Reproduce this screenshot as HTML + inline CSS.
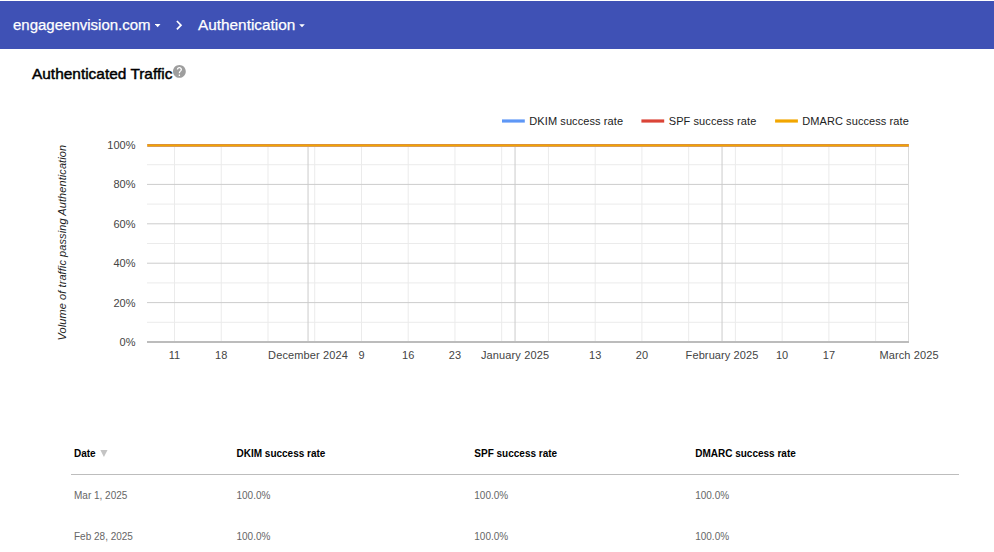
<!DOCTYPE html>
<html><head><meta charset="utf-8"><title>Postmaster Tools</title>
<style>
html,body{margin:0;padding:0;background:#fff;}
body{width:994px;height:552px;overflow:hidden;position:relative;font-family:"Liberation Sans",sans-serif;}
.bar{position:absolute;left:0;top:1px;width:994px;height:48px;background:#3f51b5;}
.bar span{position:absolute;top:12px;line-height:24px;font-size:15.5px;color:#fff;white-space:nowrap;transform-origin:0 50%;-webkit-text-stroke:0.25px #fff;}
.bar svg{position:absolute;}
.title{position:absolute;left:31.5px;top:64px;font-size:15px;line-height:20px;font-weight:normal;color:#000;white-space:nowrap;-webkit-text-stroke:0.45px #000;transform-origin:0 50%;}
.help{position:absolute;left:173.1px;top:64.9px;width:12.8px;height:12.8px;}
svg.chart{position:absolute;left:0;top:0;}
svg.chart text{font-family:"Liberation Sans",sans-serif;font-size:11px;}
.th,.td{position:absolute;font-size:10px;line-height:12px;white-space:nowrap;}
.th{font-weight:bold;color:#000;top:448px;}
.td{color:#666;}
.sep{position:absolute;left:71px;top:474px;width:888px;height:1px;background:#bdbdbd;}
</style></head><body>
<div class="bar">
<span style="left:13px;transform:scaleX(0.9677)" id="h1">engageenvision.com</span>
<svg style="left:155px;top:22.5px" width="6" height="4" viewBox="0 0 6 4"><path d="M-0.2 0H5.5L2.65 3.2Z" fill="#fff"/></svg>
<svg style="left:174px;top:18px" width="10" height="12" viewBox="0 0 10 12"><path d="M2.9 2.0L7.0 6.2L2.9 10.4" fill="none" stroke="#fff" stroke-width="1.7"/></svg>
<span style="left:198px;transform:scaleX(0.990)" id="h2">Authentication</span>
<svg style="left:299px;top:22.5px" width="6" height="4" viewBox="0 0 6 4"><path d="M0.2 0.2H5.8L3 3.2Z" fill="#fff"/></svg>
</div>
<div class="title" id="ttl" style="transform:scaleX(1.0287)">Authenticated Traffic</div>
<svg class="help" viewBox="2 2 20 20"><path fill="#9e9e9e" d="M12 2C6.48 2 2 6.48 2 12s4.48 10 10 10 10-4.48 10-10S17.52 2 12 2zm1 17h-2v-2h2v2zm2.07-7.75l-.9.92C13.45 12.9 13 13.5 13 15h-2v-.5c0-1.1.45-2.1 1.17-2.83l1.24-1.26c.37-.36.59-.86.59-1.41 0-1.1-.9-2-2-2s-2 .9-2 2H8c0-2.21 1.79-4 4-4s4 1.79 4 4c0 .88-.36 1.68-.93 2.25z"/></svg>

<svg class="chart" width="994" height="430" viewBox="0 0 994 430">
<rect x="147.0" y="321.80" width="762.0" height="1" fill="#ebebeb"/>
<rect x="147.0" y="282.40" width="762.0" height="1" fill="#ebebeb"/>
<rect x="147.0" y="243.00" width="762.0" height="1" fill="#ebebeb"/>
<rect x="147.0" y="203.60" width="762.0" height="1" fill="#ebebeb"/>
<rect x="147.0" y="164.20" width="762.0" height="1" fill="#ebebeb"/>
<rect x="173.99" y="145" width="1" height="197" fill="#ebebeb"/>
<rect x="220.73" y="145" width="1" height="197" fill="#ebebeb"/>
<rect x="267.48" y="145" width="1" height="197" fill="#ebebeb"/>
<rect x="314.22" y="145" width="1" height="197" fill="#ebebeb"/>
<rect x="360.96" y="145" width="1" height="197" fill="#ebebeb"/>
<rect x="407.70" y="145" width="1" height="197" fill="#ebebeb"/>
<rect x="454.44" y="145" width="1" height="197" fill="#ebebeb"/>
<rect x="501.18" y="145" width="1" height="197" fill="#ebebeb"/>
<rect x="547.93" y="145" width="1" height="197" fill="#ebebeb"/>
<rect x="594.67" y="145" width="1" height="197" fill="#ebebeb"/>
<rect x="641.41" y="145" width="1" height="197" fill="#ebebeb"/>
<rect x="688.15" y="145" width="1" height="197" fill="#ebebeb"/>
<rect x="734.89" y="145" width="1" height="197" fill="#ebebeb"/>
<rect x="781.64" y="145" width="1" height="197" fill="#ebebeb"/>
<rect x="828.38" y="145" width="1" height="197" fill="#ebebeb"/>
<rect x="875.12" y="145" width="1" height="197" fill="#ebebeb"/>
<rect x="147.0" y="302.10" width="762.0" height="1" fill="#cccccc"/>
<rect x="147.0" y="262.70" width="762.0" height="1" fill="#cccccc"/>
<rect x="147.0" y="223.30" width="762.0" height="1" fill="#cccccc"/>
<rect x="147.0" y="183.90" width="762.0" height="1" fill="#cccccc"/>
<rect x="147.0" y="144.50" width="762.0" height="1" fill="#cccccc"/>
<rect x="307.54" y="145" width="1" height="197" fill="#cccccc"/>
<rect x="514.54" y="145" width="1" height="197" fill="#cccccc"/>
<rect x="721.54" y="145" width="1" height="197" fill="#cccccc"/>
<rect x="908.05" y="145" width="0.95" height="197" fill="#d9d9d9"/>
<rect x="147.0" y="341" width="762.0" height="2" fill="#bcbcbc"/>
<rect x="147.2" y="144" width="761.7" height="1" fill="rgb(222,145,52)"/>
<rect x="147.2" y="145" width="761.7" height="1" fill="#f2a600"/>
<rect x="147.2" y="146" width="761.7" height="1" fill="rgb(218,155,88)"/>
<!-- legend -->
<path d="M502 121H524.8" stroke="#5e97f6" stroke-width="3.2"/>
<text x="529.3" y="124.8" fill="#222" textLength="93.7" lengthAdjust="spacing">DKIM success rate</text>
<path d="M641.4 121H664.2" stroke="#db4437" stroke-width="3.2"/>
<text x="668.7" y="124.8" fill="#222" textLength="87.6" lengthAdjust="spacing">SPF success rate</text>
<path d="M775.1 121H797.9" stroke="#f2a600" stroke-width="3.2"/>
<text x="802.2" y="124.8" fill="#222" textLength="106.6" lengthAdjust="spacing">DMARC success rate</text>
<text x="135.5" y="345.9" text-anchor="end" fill="#444">0%</text>
<text x="135.5" y="306.5" text-anchor="end" fill="#444">20%</text>
<text x="135.5" y="267.1" text-anchor="end" fill="#444">40%</text>
<text x="135.5" y="227.7" text-anchor="end" fill="#444">60%</text>
<text x="135.5" y="188.3" text-anchor="end" fill="#444">80%</text>
<text x="135.5" y="148.9" text-anchor="end" fill="#444">100%</text>
<text x="174.5" y="359" text-anchor="middle" fill="#444">11</text>
<text x="221.2" y="359" text-anchor="middle" fill="#444">18</text>
<text x="308.0" y="359" text-anchor="middle" fill="#444" textLength="79.9" lengthAdjust="spacing">December 2024</text>
<text x="361.5" y="359" text-anchor="middle" fill="#444">9</text>
<text x="408.2" y="359" text-anchor="middle" fill="#444">16</text>
<text x="454.9" y="359" text-anchor="middle" fill="#444">23</text>
<text x="515.0" y="359" text-anchor="middle" fill="#444" textLength="68.1" lengthAdjust="spacing">January 2025</text>
<text x="595.2" y="359" text-anchor="middle" fill="#444">13</text>
<text x="641.9" y="359" text-anchor="middle" fill="#444">20</text>
<text x="722.0" y="359" text-anchor="middle" fill="#444" textLength="72.8" lengthAdjust="spacing">February 2025</text>
<text x="782.1" y="359" text-anchor="middle" fill="#444">10</text>
<text x="828.9" y="359" text-anchor="middle" fill="#444">17</text>
<text x="909.0" y="359" text-anchor="middle" fill="#444" textLength="59" lengthAdjust="spacing">March 2025</text>
<text transform="translate(66,242.7) rotate(-90)" text-anchor="middle" font-style="italic" fill="#222" textLength="195.6" lengthAdjust="spacing">Volume of traffic passing Authentication</text>
</svg>

<div class="th" style="left:74px">Date</div>
<svg style="position:absolute;left:99.5px;top:450px" width="8" height="8" viewBox="0 0 8 8"><path d="M0.35 0H7.5L3.92 7.05Z" fill="#c4c4c4"/></svg>
<div class="th" style="left:236.5px">DKIM success rate</div>
<div class="th" style="left:474.3px">SPF success rate</div>
<div class="th" style="left:695.2px">DMARC success rate</div>
<div class="sep"></div>
<div class="td" style="left:74px;top:490px">Mar 1, 2025</div>
<div class="td" style="left:236.5px;top:490px">100.0%</div>
<div class="td" style="left:474.3px;top:490px">100.0%</div>
<div class="td" style="left:695.2px;top:490px">100.0%</div>
<div class="td" style="left:74px;top:531px">Feb 28, 2025</div>
<div class="td" style="left:236.5px;top:531px">100.0%</div>
<div class="td" style="left:474.3px;top:531px">100.0%</div>
<div class="td" style="left:695.2px;top:531px">100.0%</div>
</body></html>
